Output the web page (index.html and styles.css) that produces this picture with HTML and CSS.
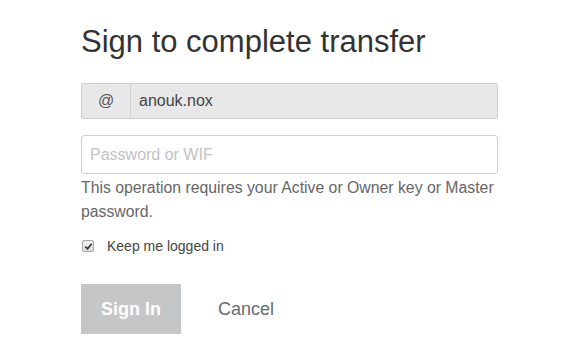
FILE: index.html
```html
<!DOCTYPE html>
<html>
<head>
<meta charset="utf-8">
<link rel="stylesheet" href="styles.css">
</head>
<body>
<div class="page">
  <h1 class="title">Sign to complete transfer</h1>
  <div class="input-group">
    <span class="addon">@</span>
    <span class="account">anouk.nox</span>
  </div>
  <input class="password" type="password" placeholder="Password or WIF">
  <p class="help">This operation requires your Active or Owner key or Master password.</p>
  <label class="remember">
    <span class="check"><svg viewBox="0 0 10 10" width="9" height="9"><path d="M1.5 5.2 L4 7.6 L8.6 2" fill="none" stroke="#333" stroke-width="1.9"/></svg></span>
    <span class="remember-text">Keep me logged in</span>
  </label>
  <div class="actions">
    <button class="btn-sign">Sign In</button>
    <button class="btn-cancel">Cancel</button>
  </div>
</div>
</body>
</html>
```

FILE: styles.css
```css
html, body {
  margin: 0;
  padding: 0;
  background: #fff;
}
body {
  font-family: "Liberation Sans", Arial, sans-serif;
  color: #333;
}
.page {
  width: 417px;
  padding: 24px 0 0 81px;
  display: flex;
  flex-direction: column;
}
.title {
  margin: 0;
  font-size: 31px;
  font-weight: normal;
  line-height: 36px;
  color: #333;
}
.input-group {
  margin-top: 23px;
  height: 34px;
  display: flex;
  align-items: stretch;
  background: #e8e8e8;
  border: 1px solid #cdcdcd;
  border-radius: 2px;
}
.addon {
  width: 48px;
  display: flex;
  align-items: center;
  justify-content: center;
  border-right: 1px solid #d2d2d2;
  font-size: 16px;
  color: #555;
}
.account {
  display: flex;
  align-items: center;
  padding-left: 8px;
  font-size: 16px;
  color: #444;
}
.password {
  margin: 16px 0 0 0;
  box-sizing: border-box;
  height: 39px;
  width: 417px;
  padding: 0 8px;
  border: 1px solid #cfcfcf;
  border-radius: 3px;
  font-family: "Liberation Sans", Arial, sans-serif;
  font-size: 16px;
  color: #333;
  outline: none;
}
.password::placeholder {
  color: #c2c2c2;
}
.help {
  margin: 2px -6px 0 0;
  font-size: 15.8px;
  line-height: 24px;
  color: #666;
}
.remember {
  margin-top: 14px;
  display: flex;
  align-items: center;
  height: 16px;
}
.check {
  width: 10px;
  height: 10px;
  border: 1px solid #a8a8a8;
  border-radius: 2px;
  background: linear-gradient(#f0f0f0, #dcdcdc);
  display: flex;
  align-items: center;
  justify-content: center;
  margin-left: 1px;
}
.remember-text {
  margin-left: 13px;
  font-size: 14px;
  color: #444;
}
.actions {
  margin-top: 30px;
  display: flex;
  align-items: center;
}
.btn-sign {
  width: 100px;
  height: 50px;
  border: none;
  background: #c5c6c7;
  color: #fff;
  font-family: "Liberation Sans", Arial, sans-serif;
  font-weight: bold;
  font-size: 18px;
  padding: 0;
}
.btn-cancel {
  margin-left: 37px;
  border: none;
  background: none;
  padding: 0;
  font-family: "Liberation Sans", Arial, sans-serif;
  font-size: 18px;
  color: #666b70;
}
```
